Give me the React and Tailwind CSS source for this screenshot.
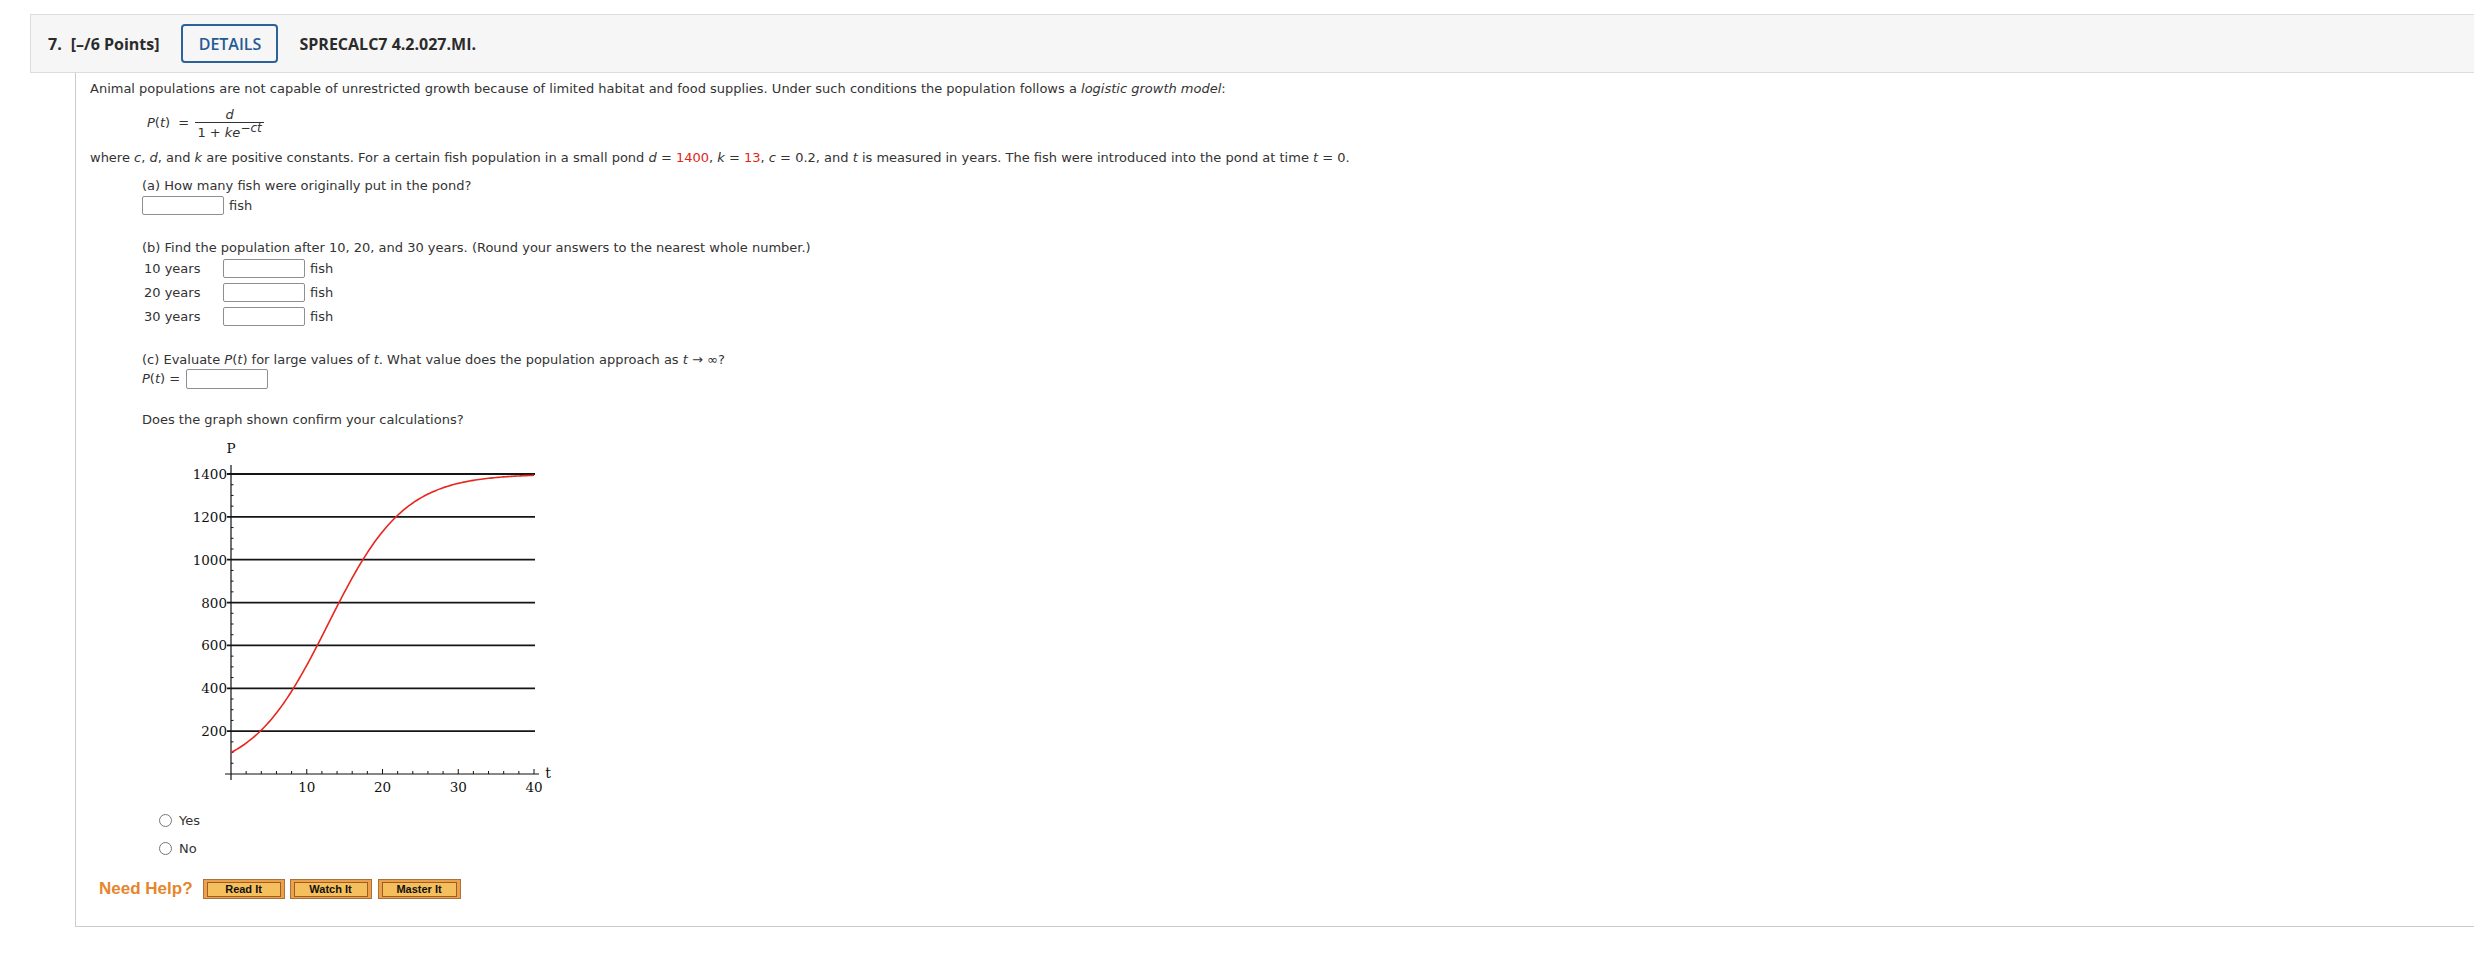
import React from 'react';

const sans = { fontFamily: '"DejaVu Sans", Verdana, sans-serif' };

const Graph = () => {
  const X0 = 51;
  const Y0 = 336;
  const tx = (t) => X0 + t * 7.575;
  const py = (p) => Y0 - p * (300 / 1400);

  const pts = [];
  for (let i = 0; i <= 160; i++) {
    const t = i * 0.25;
    const p = 1400 / (1 + 13 * Math.exp(-0.2 * t));
    pts.push(`${tx(t).toFixed(2)},${py(p).toFixed(2)}`);
  }
  const curve = 'M' + pts.join(' L');

  const grid = [200, 400, 600, 800, 1000, 1200, 1400];
  const minorY = [];
  for (let p = 50; p < 1400; p += 50) if (p % 200 !== 0) minorY.push(p);
  const ticksX = [];
  for (let t = 2; t <= 40; t += 2) ticksX.push(t);

  return (
    <svg width="380" height="360" viewBox="0 0 380 360" className="block">
      {grid.map((p) => (
        <line key={p} x1={X0 - 4} y1={py(p)} x2={355} y2={py(p)} stroke="#151515" strokeWidth="1.8" />
      ))}
      {minorY.map((p) => (
        <line key={p} x1={X0} y1={py(p)} x2={X0 + 2.5} y2={py(p)} stroke="#111" strokeWidth="1" />
      ))}
      <line x1={X0} y1={27} x2={X0} y2={342} stroke="#111" strokeWidth="1.2" />
      <line x1={45} y1={Y0} x2={359} y2={Y0} stroke="#111" strokeWidth="1.2" />
      {ticksX.map((t) => (
        <line
          key={t}
          x1={tx(t)}
          y1={Y0}
          x2={tx(t)}
          y2={t % 10 === 0 ? Y0 - 5 : Y0 - 3}
          stroke="#111"
          strokeWidth="1"
        />
      ))}
      <path d={curve} fill="none" stroke="#e8261e" strokeWidth="1.6" />
      <g style={{ fontFamily: '"DejaVu Serif", serif' }} fontSize="13.5" fill="#111">
        <text x={X0} y={15} textAnchor="middle">P</text>
        {grid.map((p) => (
          <text key={p} x={47} y={py(p) + 5} textAnchor="end">
            {p}
          </text>
        ))}
        {[10, 20, 30, 40].map((t) => (
          <text key={t} x={tx(t)} y={354} textAnchor="middle">
            {t}
          </text>
        ))}
        <text x={368} y={340} textAnchor="middle" fontSize="14">t</text>
      </g>
    </svg>
  );
};

const Radio = ({ label }) => (
  <div className="h-[28px] flex items-center">
    <span className="ml-[17px] w-[13px] h-[13px] rounded-full border border-[#767676] bg-white"></span>
    <span className="ml-[7px] text-[13px] text-[#333]">{label}</span>
  </div>
);

const HelpButton = ({ label }) => (
  <span className="h-[20px] border border-[#a8723d] bg-[#eea04a] px-[3px] py-[2px] flex">
    <span
      className="h-[15px] w-full border border-[#9a5f28] bg-[#f4bf5c] flex items-center justify-center text-[11px] font-bold text-[#111]"
      style={{ fontFamily: '"Liberation Sans", Arial, sans-serif' }}
    >
      {label}
    </span>
  </span>
);

const AnswerBox = ({ h = 'h-[19px]' }) => (
  <span className={`w-[82px] ${h} border border-[#8f8f8f] rounded-[2px] bg-white inline-block`}></span>
);

export default function App() {
  return (
    <div className="min-h-screen bg-white pt-[14px] pl-[30px] text-[#333]" style={sans}>
      {/* Header */}
      <div
        className="h-[59px] border-t border-l border-b border-[#dcdcdc] bg-[#f6f6f6] flex items-center pl-[17px] text-[#2b2b2b]"
        style={{ fontFamily: '"Open Sans", sans-serif' }}
      >
        <span className="text-[16px] font-bold">7.</span>
        <span className="ml-[9px] text-[16px] font-bold">[–/6 Points]</span>
        <span className="ml-[22px] w-[97px] h-[39px] border-2 border-[#2d6199] rounded-[4px] flex items-center justify-center text-[16px] font-semibold text-[#245a94]">
          DETAILS
        </span>
        <span className="ml-[21px] text-[16px] font-bold">SPRECALC7 4.2.027.MI.</span>
      </div>

      {/* Content */}
      <div className="ml-[45px] h-[854px] border-l border-b border-[#cccccc] pl-[14px] pt-[7px] text-[13px]">
        <p className="leading-[18px]">
          Animal populations are not capable of unrestricted growth because of limited habitat and food supplies. Under
          such conditions the population follows a <i>logistic growth model</i>:
        </p>

        <div className="mt-[10px] flex items-start">
          <span className="ml-[57px] mt-[6px] leading-[18px]">
            <i>P</i>(<i>t</i>)&nbsp; =&nbsp;
          </span>
          <span className="ml-[2px] flex flex-col items-stretch">
            <span className="leading-[14px] text-center border-b border-[#333] pb-0">
              <i>d</i>
            </span>
            <span className="leading-[20px] text-center px-[2px]">
              1 + <i>ke</i>
              <span className="relative -top-[5px] text-[12px]">
                −<i>ct</i>
              </span>
            </span>
          </span>
        </div>

        <p className="mt-[6px] leading-[18px]">
          where <i>c</i>, <i>d</i>, and <i>k</i> are positive constants. For a certain fish population in a small pond{' '}
          <i>d</i> = <span className="text-[#e3241b]">1400</span>, <i>k</i> ={' '}
          <span className="text-[#e3241b]">13</span>, <i>c</i> = 0.2, and <i>t</i> is measured in years. The fish were
          introduced into the pond at time <i>t</i> = 0.
        </p>

        <div className="ml-[52px]">
          {/* (a) */}
          <p className="mt-[10px] leading-[18px]">(a) How many fish were originally put in the pond?</p>
          <div className="mt-[1px] flex items-center gap-[5px]">
            <AnswerBox />
            <span>fish</span>
          </div>

          {/* (b) */}
          <p className="mt-[23px] leading-[18px]">
            (b) Find the population after 10, 20, and 30 years. (Round your answers to the nearest whole number.)
          </p>
          {['10 years', '20 years', '30 years'].map((y) => (
            <div key={y} className="h-[24px] flex items-center">
              <span className="w-[81px] pl-[2px]">{y}</span>
              <AnswerBox />
              <span className="ml-[5px]">fish</span>
            </div>
          ))}

          {/* (c) */}
          <p className="mt-[22px] leading-[18px]">
            (c) Evaluate <i>P</i>(<i>t</i>) for large values of <i>t</i>. What value does the population approach as{' '}
            <i>t</i> → ∞?
          </p>
          <div className="flex items-center h-[21px]">
            <span>
              <i>P</i>(<i>t</i>) =
            </span>
            <span className="ml-[6px] flex">
              <AnswerBox h="h-[20px]" />
            </span>
          </div>

          <p className="mt-[21px] leading-[18px]">Does the graph shown confirm your calculations?</p>

          <div className="mt-[9px] ml-[38px]">
            <Graph />
          </div>

          <div className="mt-[9px]">
            <Radio label="Yes" />
            <Radio label="No" />
          </div>
        </div>

        <div className="mt-[16px] ml-[9px] flex items-center h-[20px]">
          <span
            className="text-[17px] font-bold text-[#e5862c]"
            style={{ fontFamily: '"Liberation Sans", Arial, sans-serif' }}
          >
            Need Help?
          </span>
          <span className="ml-[10px] w-[82px]">
            <HelpButton label="Read It" />
          </span>
          <span className="ml-[5px] w-[82px]">
            <HelpButton label="Watch It" />
          </span>
          <span className="ml-[6px] w-[83px]">
            <HelpButton label="Master It" />
          </span>
        </div>
      </div>
    </div>
  );
}
